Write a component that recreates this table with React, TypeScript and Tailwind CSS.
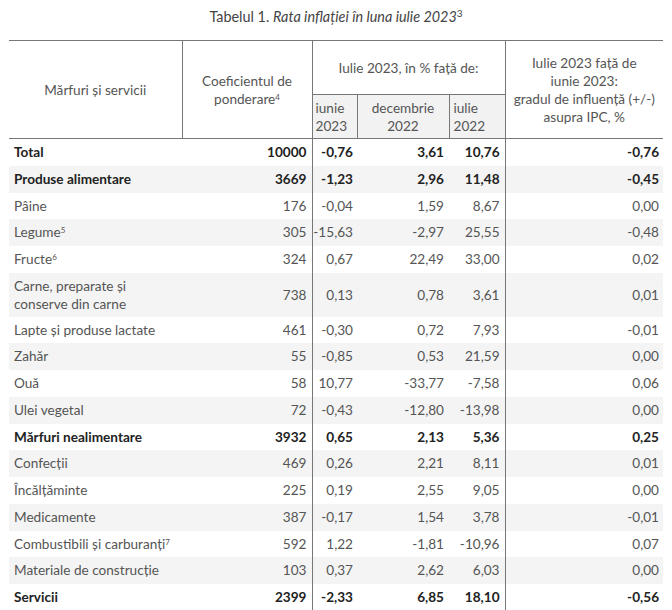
import React from 'react';

type Row = {
  name: string;
  sup?: string;
  bold?: boolean;
  tall?: boolean;
  w: string;
  a: string;
  b: string;
  c: string;
  d: string;
};

const rows: Row[] = [
  { name: "Total", bold: true, w: "10000", a: "-0,76", b: "3,61", c: "10,76", d: "-0,76" },
  { name: "Produse alimentare", bold: true, w: "3669", a: "-1,23", b: "2,96", c: "11,48", d: "-0,45" },
  { name: "Pâine", w: "176", a: "-0,04", b: "1,59", c: "8,67", d: "0,00" },
  { name: "Legume", sup: "5", w: "305", a: "-15,63", b: "-2,97", c: "25,55", d: "-0,48" },
  { name: "Fructe", sup: "6", w: "324", a: "0,67", b: "22,49", c: "33,00", d: "0,02" },
  { name: "Carne, preparate și conserve din carne", tall: true, w: "738", a: "0,13", b: "0,78", c: "3,61", d: "0,01" },
  { name: "Lapte și produse lactate", w: "461", a: "-0,30", b: "0,72", c: "7,93", d: "-0,01" },
  { name: "Zahăr", w: "55", a: "-0,85", b: "0,53", c: "21,59", d: "0,00" },
  { name: "Ouă", w: "58", a: "10,77", b: "-33,77", c: "-7,58", d: "0,06" },
  { name: "Ulei vegetal", w: "72", a: "-0,43", b: "-12,80", c: "-13,98", d: "0,00" },
  { name: "Mărfuri nealimentare", bold: true, w: "3932", a: "0,65", b: "2,13", c: "5,36", d: "0,25" },
  { name: "Confecții", w: "469", a: "0,26", b: "2,21", c: "8,11", d: "0,01" },
  { name: "Încălțăminte", w: "225", a: "0,19", b: "2,55", c: "9,05", d: "0,00" },
  { name: "Medicamente", w: "387", a: "-0,17", b: "1,54", c: "3,78", d: "-0,01" },
  { name: "Combustibili și carburanți", sup: "7", w: "592", a: "1,22", b: "-1,81", c: "-10,96", d: "0,07" },
  { name: "Materiale de construcție", w: "103", a: "0,37", b: "2,62", c: "6,03", d: "0,00" },
  { name: "Servicii", bold: true, w: "2399", a: "-2,33", b: "6,85", c: "18,10", d: "-0,56" },
];

// rows average ~26.7px in the source; alternate 27/26 so the grid doesn't drift
function rowHeight(i: number, tall?: boolean) {
  if (tall) return 'h-[44px]';
  const step = 26.75;
  const hgt = Math.round((i + 1) * step) - Math.round(i * step);
  return hgt >= 27 ? 'h-[27px]' : 'h-[26px]';
}

export default function App() {
  return (
    <div className="min-h-screen bg-white text-[#555] text-[13.6px] font-['Lato','Liberation_Sans',sans-serif]">
      <div className="pl-[9px] pt-[7px]">
        <p className="w-[654px] text-center text-[14.4px] leading-[20px] text-[#444] mb-[13px]">
          Tabelul 1. <i>Rata inflației în luna iulie 2023</i>
          <sup className="text-[10px]">3</sup>
        </p>

        <table className="w-[654px] table-fixed border-collapse border-t border-[#777]">
          <colgroup>
            <col className="w-[173px]" />
            <col className="w-[130px]" />
            <col className="w-[45px]" />
            <col className="w-[92px]" />
            <col className="w-[56px]" />
            <col className="w-[158px]" />
          </colgroup>
          <thead className="leading-[18px]">
            <tr className="h-[54px]">
              <th rowSpan={2} className="font-normal text-center align-middle border-r border-b border-[#777] px-1">
                Mărfuri și servicii
              </th>
              <th rowSpan={2} className="font-normal text-center align-middle border-r border-b border-[#777] px-1">
                Coeficientul de
                <br />
                ponderare<sup className="text-[8px]">4</sup>
              </th>
              <th colSpan={3} className="font-normal text-center align-middle border-r border-b border-[#777]">
                Iulie 2023, în % față de:
              </th>
              <th rowSpan={2} className="font-normal text-center align-middle border-b border-[#777] px-1">
                Iulie 2023 față de
                <br />
                iunie 2023:
                <br />
                gradul de influență (+/-)
                <br />
                asupra IPC, %
              </th>
            </tr>
            <tr className="h-[44px]">
              <th className="font-normal text-left align-middle bg-[#f2f2f2] border-r border-b border-[#777] pl-[3px]">
                iunie
                <br />
                2023
              </th>
              <th className="font-normal text-center align-middle bg-[#f2f2f2] border-r border-b border-[#777]">
                decembrie
                <br />
                2022
              </th>
              <th className="font-normal text-left align-middle bg-[#f2f2f2] border-r border-b border-[#777] pl-[4px]">
                iulie
                <br />
                2022
              </th>
            </tr>
          </thead>
          <tbody className="leading-[18px]">
            {rows.map((r, i) => (
              <tr
                key={r.name}
                className={`${i % 2 === 1 ? 'bg-[#f4f4f4]' : 'bg-white'} ${r.bold ? 'font-bold text-[#222]' : ''} ${rowHeight(i, r.tall)}`}
              >
                <td className="pl-[5px] pr-2 align-middle">
                  {r.name}
                  {r.sup && <sup className="text-[8px] font-normal">{r.sup}</sup>}
                </td>
                <td className="text-right pr-[5px] align-middle border-r border-[#777]">{r.w}</td>
                <td className="text-right pr-[4px] pl-0 align-middle whitespace-nowrap">{r.a}</td>
                <td className="text-right pr-[5px] align-middle">{r.b}</td>
                <td className="text-right pr-[5px] align-middle border-r border-[#777]">{r.c}</td>
                <td className="text-right pr-[4px] align-middle">{r.d}</td>
              </tr>
            ))}
          </tbody>
        </table>
      </div>
    </div>
  );
}
